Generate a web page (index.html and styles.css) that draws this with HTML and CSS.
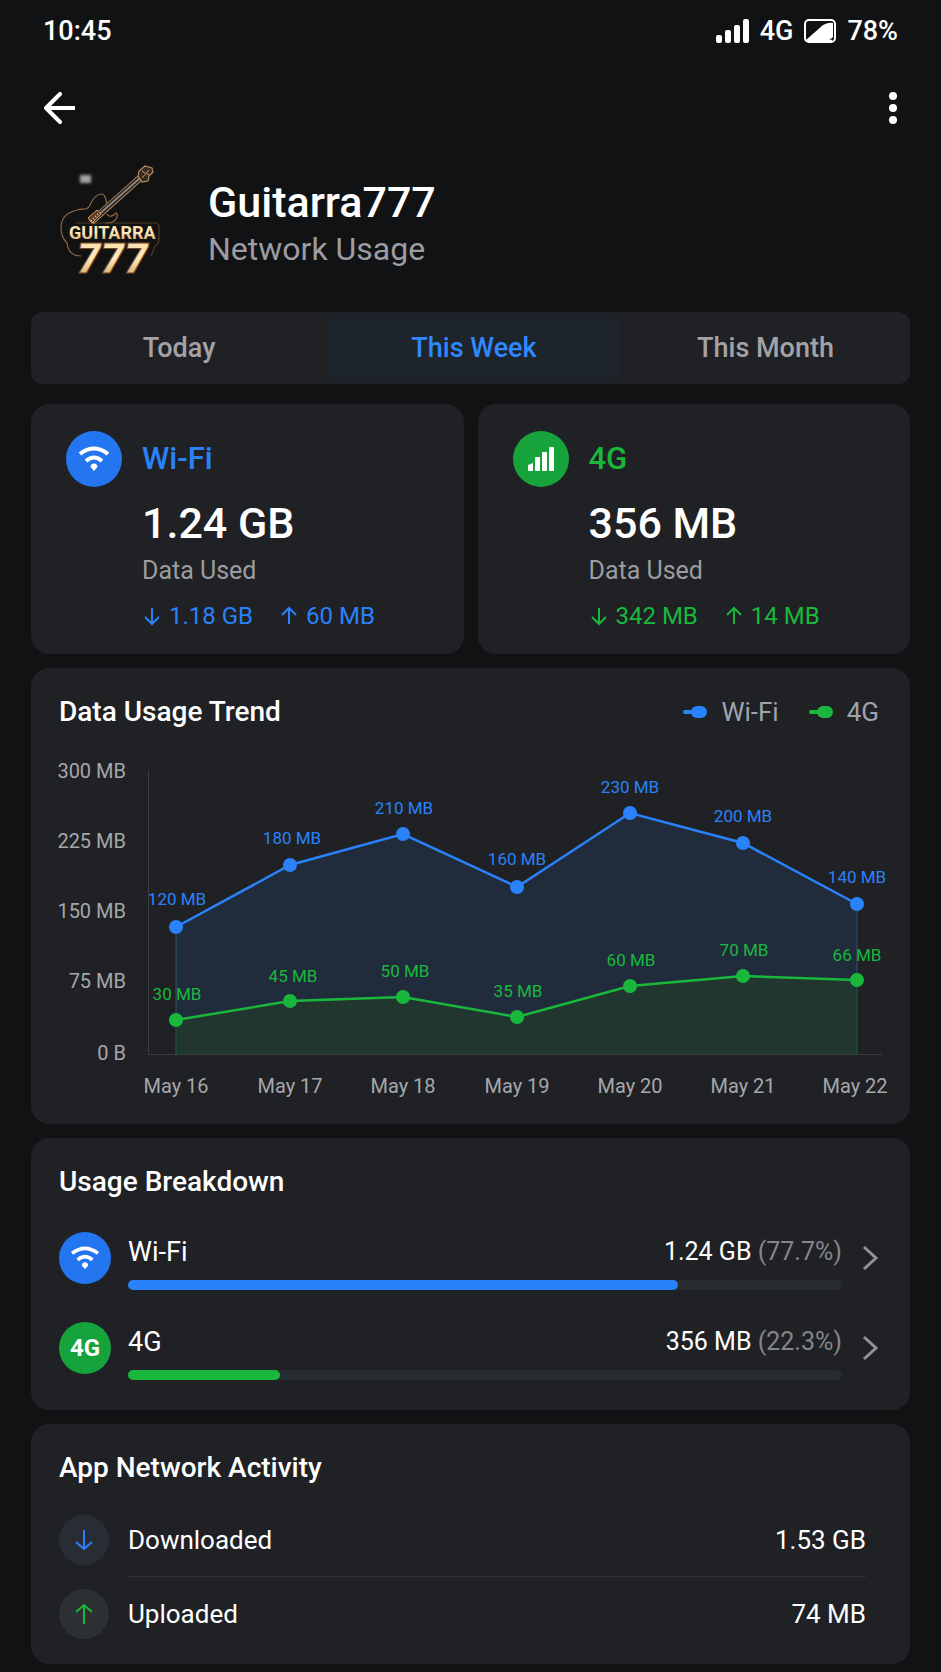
FILE: index.html
```html
<!DOCTYPE html>
<html lang="en">
<head>
<meta charset="UTF-8">
<meta name="viewport" content="width=device-width, initial-scale=1.0">
<title>Guitarra777 - Network Usage</title>
<link rel="stylesheet" href="styles.css">
</head>
<body>
  <div class="status-bar">
    <span>10:45</span>
    <div class="status-right">
      <svg width="33" height="26" viewBox="0 0 33 26" fill="#fff">
        <rect x="0" y="17" width="6" height="8" rx="2"/>
        <rect x="9" y="12" width="6" height="13" rx="2"/>
        <rect x="18" y="7" width="6" height="18" rx="2"/>
        <rect x="27" y="1" width="6" height="24" rx="2"/>
      </svg>
      <span>4G</span>
      <svg width="32" height="26" viewBox="0 0 32 26">
        <rect x="1" y="2" width="30" height="22" rx="4" fill="none" stroke="#fff" stroke-width="2"/>
        <path d="M2 22L19 7Q25 4 29 5V19Q28 21 25 21L28 22V24H4Z" fill="#fff"/>
      </svg>
      <span>78%</span>
    </div>
  </div>

  <header class="app-bar">
    <button class="icon-button" aria-label="Back">
      <svg width="32" height="32" viewBox="0 0 32 32" fill="none" stroke="#fff" stroke-width="4">
        <path d="M16 2L2 16L16 30" stroke-linecap="round" stroke-linejoin="round"/>
        <path d="M3 16H31"/>
      </svg>
    </button>
    <button class="icon-button" aria-label="More options">
      <svg width="8" height="32" viewBox="0 0 8 32" fill="#fff">
        <circle cx="4" cy="4" r="4"/>
        <circle cx="4" cy="16" r="4"/>
        <circle cx="4" cy="28" r="4"/>
      </svg>
    </button>
  </header>

  <section class="profile">
    <svg class="logo" viewBox="0 0 124 124" role="img" aria-label="Guitarra 777">
      <defs>
        <linearGradient id="gold" x1="0" y1="0" x2="0" y2="1">
          <stop offset="0" stop-color="#f5dca6"/>
          <stop offset="0.5" stop-color="#ffe9bd"/>
          <stop offset="1" stop-color="#c99350"/>
        </linearGradient>
        <filter id="glow" x="-50%" y="-50%" width="200%" height="200%">
          <feGaussianBlur stdDeviation="1.5"/>
        </filter>
      </defs>
      <rect x="2" y="2" width="120" height="120" rx="20" fill="#121212"/>
      <rect x="30" y="15" width="11" height="8" fill="#a3a3a1" filter="url(#glow)"/>
      <!-- body -->
      <g fill="none" stroke="#8f6a42" stroke-width="1.2">
        <path d="M57 44C55 37 55 34 51 34C45 35 42 40 40 45C37 51 33 48 27 50C16 53 11 58 11 68C11 76 14 80 17 83C18 92 23 96 31 96"/>
        <path d="M57 54C59 58 63 56 66 53C69 55 67 60 62 62C60 64 57 62 55 63"/>
        <path d="M26 63H106Q109 63 109 67V79Q109 84 105 86L101 96" stroke="#4d3b28"/>
      </g>
      <!-- neck and head -->
      <path d="M41 62L90 18" stroke="#a98155" stroke-width="7"/>
      <path d="M43 60L91 17" stroke="#24211f" stroke-width="5"/>
      <path d="M46 57L90 18" stroke="#898681" stroke-width="2"/>
      <path d="M38 58L47 50L51 54L42 63Z" fill="#5b3b24" stroke="#d99c62" stroke-width="1"/>
      <path d="M41 61L49 53" stroke="#f3bf8c" stroke-width="2" stroke-dasharray="1 2"/>
      <path d="M88 16L89 11L95 6L102 8L103 12L99 16L98 21L92 22Z" fill="#332b24" stroke="#b58a5b" stroke-width="1.2"/>
      <path d="M92 18L99 10M92 11L95 13M99 15L96 13" stroke="#c49a6b" stroke-width="1"/>
      <text class="logo-name" x="19" y="79">GUITARRA</text>
      <text class="logo-number" x="27" y="113">777</text>
    </svg>
    <div>
      <h1>Guitarra777</h1>
      <p class="subtitle">Network Usage</p>
    </div>
  </section>

  <main>
    <div class="tabs" role="tablist">
      <button class="tab" role="tab">Today</button>
      <button class="tab active" role="tab" aria-selected="true">This Week</button>
      <button class="tab" role="tab">This Month</button>
    </div>

    <div class="stats">
      <section class="card stat wifi">
        <span class="circle">
          <svg width="32" height="26" viewBox="0 0 32 26" fill="none" stroke="#fff" stroke-width="4">
            <path d="M2 8Q16 -3 30 8"/>
            <path d="M8 15Q16 8 24 15"/>
            <path d="M16 17.500C14 17.500 12.500 19 12.500 21L16 25L19.500 21C19.500 19 18 17.500 16 17.500Z" fill="#fff" stroke="none"/>
          </svg>
        </span>
        <div class="stat-text">
          <h2>Wi-Fi</h2>
          <p class="amount">1.24 GB</p>
          <p class="caption">Data Used</p>
          <div class="transfer">
            <span><svg class="arrow" viewBox="0 0 20 20"><path d="M10 2V17M3 11L10 18L17 11"/></svg>1.18 GB</span>
            <span><svg class="arrow" viewBox="0 0 20 20"><path d="M10 18V3M3 9L10 2L17 9"/></svg>60 MB</span>
          </div>
        </div>
      </section>
      <section class="card stat mobile">
        <span class="circle">
          <svg width="28" height="24" viewBox="0 0 28 24" fill="#fff">
            <path d="M1 18L6 16V24H1Z"/>
            <rect x="8" y="10" width="5" height="14" rx="1"/>
            <rect x="15" y="5" width="5" height="19" rx="1"/>
            <rect x="22" y="0" width="5" height="24" rx="1"/>
          </svg>
        </span>
        <div class="stat-text">
          <h2>4G</h2>
          <p class="amount">356 MB</p>
          <p class="caption">Data Used</p>
          <div class="transfer">
            <span><svg class="arrow" viewBox="0 0 20 20"><path d="M10 2V17M3 11L10 18L17 11"/></svg>342 MB</span>
            <span><svg class="arrow" viewBox="0 0 20 20"><path d="M10 18V3M3 9L10 2L17 9"/></svg>14 MB</span>
          </div>
        </div>
      </section>
    </div>

    <section class="card">
      <div class="card-head">
        <h3>Data Usage Trend</h3>
        <div class="legend">
          <span class="wifi"><svg width="24" height="12" viewBox="0 0 24 12"><rect y="4" width="14" height="4" rx="2"/><rect x="8" width="16" height="12" rx="6"/></svg>Wi-Fi</span>
          <span class="mobile"><svg width="24" height="12" viewBox="0 0 24 12"><rect y="4" width="14" height="4" rx="2"/><rect x="8" width="16" height="12" rx="6"/></svg>4G</span>
        </div>
      </div>
      <svg class="chart" viewBox="0 0 823 350">
        <path class="area-wifi" d="M117 177L231 115L344 84L458 137L571 63L684 93L798 154V305H117Z"/>
        <path class="area-mobile" d="M117 270L231 251L344 247L458 267L571 236L684 226L798 230V305H117Z"/>
        <path class="axis" d="M89.500 20V304.500H823"/>
        <path class="edge-wifi" d="M117 177V270M798 154V230"/>
        <path class="edge-mobile" d="M117 270V305M798 230V305"/>

        <g class="y-labels">
          <text x="67" y="28">300 MB</text>
          <text x="67" y="98">225 MB</text>
          <text x="67" y="168">150 MB</text>
          <text x="67" y="238">75 MB</text>
          <text x="67" y="310">0 B</text>
        </g>
        <g class="x-labels">
          <text x="117" y="343">May 16</text>
          <text x="231" y="343">May 17</text>
          <text x="344" y="343">May 18</text>
          <text x="458" y="343">May 19</text>
          <text x="571" y="343">May 20</text>
          <text x="684" y="343">May 21</text>
          <text x="796" y="343">May 22</text>
        </g>

        <g class="series wifi">
          <polyline points="117,177 231,115 344,84 458,137 571,63 684,93 798,154"/>
          <circle cx="117" cy="177" r="7"/>
          <circle cx="231" cy="115" r="7"/>
          <circle cx="344" cy="84" r="7"/>
          <circle cx="458" cy="137" r="7"/>
          <circle cx="571" cy="63" r="7"/>
          <circle cx="684" cy="93" r="7"/>
          <circle cx="798" cy="154" r="7"/>
          <text x="118" y="155">120 MB</text>
          <text x="233" y="94">180 MB</text>
          <text x="345" y="64">210 MB</text>
          <text x="458" y="115">160 MB</text>
          <text x="571" y="43">230 MB</text>
          <text x="684" y="72">200 MB</text>
          <text x="798" y="133">140 MB</text>
        </g>
        <g class="series mobile">
          <polyline points="117,270 231,251 344,247 458,267 571,236 684,226 798,230"/>
          <circle cx="117" cy="270" r="7"/>
          <circle cx="231" cy="251" r="7"/>
          <circle cx="344" cy="247" r="7"/>
          <circle cx="458" cy="267" r="7"/>
          <circle cx="571" cy="236" r="7"/>
          <circle cx="684" cy="226" r="7"/>
          <circle cx="798" cy="230" r="7"/>
          <text x="118" y="250">30 MB</text>
          <text x="234" y="232">45 MB</text>
          <text x="346" y="227">50 MB</text>
          <text x="459" y="247">35 MB</text>
          <text x="572" y="216">60 MB</text>
          <text x="685" y="206">70 MB</text>
          <text x="798" y="211">66 MB</text>
        </g>
      </svg>
    </section>

    <section class="card breakdown">
      <h3>Usage Breakdown</h3>
      <a class="usage wifi" href="#wifi">
        <span class="circle">
          <svg width="30" height="24" viewBox="0 0 32 26" fill="none" stroke="#fff" stroke-width="4">
            <path d="M2 8Q16 -3 30 8"/>
            <path d="M8 15Q16 8 24 15"/>
            <path d="M16 17.500C14 17.500 12.500 19 12.500 21L16 25L19.500 21C19.500 19 18 17.500 16 17.500Z" fill="#fff" stroke="none"/>
          </svg>
        </span>
        <div class="usage-main">
          <div class="usage-text"><span>Wi-Fi</span><span class="value">1.24 GB <span class="percent">(77.7%)</span></span></div>
          <div class="bar"><div class="bar-fill" style="width: 77%"></div></div>
        </div>
        <svg class="chevron" viewBox="0 0 24 28"><path d="M6 3L18 14L6 25"/></svg>
      </a>
      <a class="usage mobile" href="#4g">
        <span class="circle">4G</span>
        <div class="usage-main">
          <div class="usage-text"><span>4G</span><span class="value">356 MB <span class="percent">(22.3%)</span></span></div>
          <div class="bar"><div class="bar-fill" style="width: 21.3%"></div></div>
        </div>
        <svg class="chevron" viewBox="0 0 24 28"><path d="M6 3L18 14L6 25"/></svg>
      </a>
    </section>

    <section class="card activity">
      <h3>App Network Activity</h3>
      <div class="activity-row wifi">
        <span class="circle"><svg width="24" height="24" viewBox="0 0 24 24"><path d="M12 2V21M4 14L12 21L20 14"/></svg></span>
        <div class="activity-text"><span>Downloaded</span><span>1.53 GB</span></div>
      </div>
      <div class="activity-row mobile">
        <span class="circle"><svg width="24" height="24" viewBox="0 0 24 24"><path d="M12 22V3M4 10L12 3L20 10"/></svg></span>
        <div class="activity-text"><span>Uploaded</span><span>74 MB</span></div>
      </div>
    </section>
  </main>
</body>
</html>
```
FILE: styles.css
```css
* {
  box-sizing: border-box;
}
body {
  margin: 0;
  font-family: Roboto, "Liberation Sans", sans-serif;
  font-size: 26px;
  color: #fff;
  background-color: #111214;
}
h1, h2, h3, p {
  margin: 0;
  font-weight: 500;
}
button {
  font: inherit;
  color: inherit;
  background: none;
  border: none;
  padding: 0;
  cursor: pointer;
}
svg {
  display: block;
  flex-shrink: 0;
}
.wifi {
  --color: #2a82fb;
  --circle: #2475f0;
}
.mobile {
  --color: #19b83d;
  --circle: #17a33c;
}

/* top of the screen */
.status-bar {
  display: flex;
  justify-content: space-between;
  align-items: center;
  height: 62px;
  padding: 0 43px;
  font-size: 27px;
  font-weight: 500;
}
.status-right {
  display: flex;
  align-items: center;
  gap: 11px;
}
.app-bar {
  display: flex;
  justify-content: space-between;
  align-items: center;
  height: 91px;
  padding: 0 44px;
}
.icon-button {
  display: flex;
}
.profile {
  display: flex;
  align-items: center;
  gap: 34px;
  padding: 7px 50px 28px;
}
.logo {
  width: 124px;
  height: 124px;
}
.logo-name {
  font-size: 18px;
  font-weight: 700;
  fill: url(#gold);
}
.logo-number {
  font-size: 42px;
  font-weight: 900;
  font-style: italic;
  fill: url(#gold);
  stroke: #7a4a24;
  stroke-width: 1px;
}
h1 {
  font-size: 43px;
  line-height: 54px;
}
.subtitle {
  font-size: 32px;
  font-weight: 400;
  line-height: 40px;
  color: #9c9ca2;
}

main {
  display: flex;
  flex-direction: column;
  gap: 14px;
  padding: 0 31px 7px;
}
.tabs {
  display: grid;
  grid-template-columns: 296fr 294fr 289fr;
  height: 72px;
  padding: 3px 0;
  margin-bottom: 6px;
  border-radius: 12px;
  background-color: #1f2124;
}
.tab {
  border-radius: 12px;
  font-size: 27px;
  font-weight: 500;
  color: #a3a3a7;
}
.tab.active {
  color: #2f88ff;
  background-color: #1e242c;
}

.card {
  padding: 26px 28px 24px;
  border-radius: 18px;
  background-color: #1f2124;
}
.circle {
  display: flex;
  align-items: center;
  justify-content: center;
  flex-shrink: 0;
  width: 52px;
  height: 52px;
  border-radius: 50%;
  background-color: var(--circle);
}
h3 {
  font-size: 28px;
  line-height: 36px;
}

/* Wi-Fi and 4G totals */
.stats {
  display: grid;
  grid-template-columns: 1fr 1fr;
  gap: 14px;
}
.stat {
  display: flex;
  gap: 20px;
  padding: 27px 20px 22px 35px;
}
.stat .circle {
  width: 56px;
  height: 56px;
}
.stat h2 {
  font-size: 31px;
  line-height: 56px;
  color: var(--color);
}
.amount {
  margin-top: 12px;
  font-size: 43px;
  line-height: 48px;
}
.caption {
  margin-top: 8px;
  font-size: 25px;
  font-weight: 400;
  line-height: 32px;
  color: #9c9ca2;
}
.transfer {
  display: flex;
  gap: 26px;
  margin-top: 13px;
  font-size: 24px;
  line-height: 32px;
  color: var(--color);
}
.transfer span {
  display: flex;
  align-items: center;
  gap: 7px;
}
.arrow {
  width: 20px;
  height: 20px;
  fill: none;
  stroke: currentColor;
  stroke-width: 2;
}

/* trend chart */
.card-head {
  display: flex;
  justify-content: space-between;
  margin-bottom: 20px;
}
.legend {
  display: flex;
  gap: 30px;
  padding-right: 3px;
  font-size: 26px;
  line-height: 36px;
  color: #9fa3ad;
}
.legend span {
  display: flex;
  align-items: center;
  gap: 14px;
}
.legend svg {
  fill: var(--color);
}
.chart {
  width: 100%;
  overflow: visible;
}
.axis {
  fill: none;
  stroke: #3a3c3f;
  stroke-width: 1;
}
.area-wifi {
  fill: #202c3c;
}
.area-mobile {
  fill: #20362e;
}
.edge-wifi {
  stroke: #2a526b;
}
.edge-mobile {
  stroke: #205c3a;
}
.y-labels, .x-labels {
  font-size: 20px;
  fill: #a6a7ab;
}
.y-labels {
  text-anchor: end;
}
.x-labels {
  text-anchor: middle;
}
.series {
  font-size: 17px;
  text-anchor: middle;
  fill: var(--color);
}
.series polyline {
  fill: none;
  stroke: var(--color);
  stroke-width: 2.5;
}

/* breakdown */
.breakdown {
  padding-bottom: 30px;
}
.usage {
  display: flex;
  align-items: flex-start;
  margin-top: 32px;
  color: #fff;
  text-decoration: none;
}
.usage .circle {
  font-size: 24px;
  font-weight: 700;
}
.usage-main {
  flex: 1;
  margin: 0 16px 0 17px;
}
.usage-text {
  display: flex;
  justify-content: space-between;
  padding-top: 2px;
  font-size: 27px;
  line-height: 36px;
}
.value {
  font-size: 25px;
}
.percent {
  color: #85868a;
}
.bar {
  height: 10px;
  margin-top: 10px;
  border-radius: 5px;
  background-color: #282b2f;
}
.bar-fill {
  height: 100%;
  border-radius: 5px;
  background-color: var(--color);
}
.chevron {
  width: 24px;
  height: 28px;
  margin-top: 12px;
  fill: none;
  stroke: #929296;
  stroke-width: 3;
}

/* activity */
.activity {
  padding-bottom: 13px;
}
.activity h3 {
  margin-bottom: 17px;
}
.activity-row {
  display: flex;
  align-items: center;
  gap: 19px;
  padding-right: 16px;
}
.activity-row .circle {
  width: 50px;
  height: 50px;
  background-color: #282d35;
}
.activity-row.mobile .circle {
  background-color: #2d3033;
}
.activity-row svg {
  fill: none;
  stroke: var(--color);
  stroke-width: 2;
}
.activity-text {
  display: flex;
  flex: 1;
  justify-content: space-between;
  line-height: 74px;
}
.activity-row.wifi .activity-text {
  box-shadow: inset 0 -1px #303235;
}
```
